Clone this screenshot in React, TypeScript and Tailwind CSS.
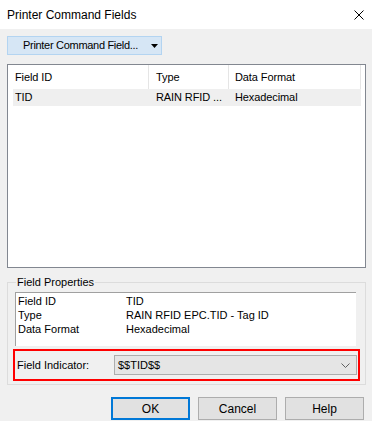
import React from 'react';

const font = { fontFamily: '"Liberation Sans", Arial, sans-serif' };

const props = [
  ['Field ID', 'TID'],
  ['Type', 'RAIN RFID EPC.TID - Tag ID'],
  ['Data Format', 'Hexadecimal'],
];

function DlgButton({ label, primary }: { label: string; primary?: boolean }) {
  return (
    <button
      className={
        primary
          ? 'w-[79px] h-[23px] bg-[#e1e1e1] border-2 border-[#0078d7] text-[12px] text-black'
          : 'w-[79px] h-[23px] bg-[#e1e1e1] border border-[#adadad] text-[12px] text-black'
      }
    >
      {label}
    </button>
  );
}

export default function App() {
  return (
    <div className="w-[372px] h-[421px] bg-[#f0f0f0] flex flex-col overflow-hidden text-black whitespace-nowrap" style={font}>
      {/* title bar */}
      <div className="h-[29px] bg-white flex items-center justify-between pl-[7px] pr-[7px] shrink-0">
        <span className="text-[12px]">Printer Command Fields</span>
        <svg width="10" height="10" viewBox="0 0 10 10" className="mr-[1px]">
          <path d="M0.5 0.5L9.5 9.5M9.5 0.5L0.5 9.5" stroke="#000" strokeWidth="1" />
        </svg>
      </div>

      <div className="flex flex-col px-[7px] pt-[7px]">
        <button className="w-[155px] h-[19px] bg-[#d6e6f5] border border-[#b3d4f1] flex items-center pl-[15px] text-[11px] tracking-[-0.3px]">
          <span>Printer Command Field...</span>
          <svg width="7" height="4" viewBox="0 0 7 4" className="ml-[13px]">
            <path d="M0 0H7L3.5 4Z" fill="#000" />
          </svg>
        </button>

        {/* list view */}
        <div className="mt-[9px] w-[359px] h-[204px] bg-white border border-[#828790] flex flex-col">
          <div className="h-[24px] flex text-[11px] tracking-[-0.1px] shrink-0">
            <div className="w-[141px] pl-[7px] flex items-center border-r border-[#e5e5e5]">Field ID</div>
            <div className="w-[80px] pl-[7px] flex items-center border-r border-[#e5e5e5]">Type</div>
            <div className="w-[132px] pl-[6px] flex items-center border-r border-[#e5e5e5]">Data Format</div>
          </div>
          <div className="ml-[5px] w-[348px] h-[17px] bg-[#efefef] flex items-center text-[11px] tracking-[-0.1px]">
            <div className="w-[136px] pl-[2px]">TID</div>
            <div className="w-[80px] pl-[7px] overflow-hidden">RAIN RFID ...</div>
            <div className="pl-[6px]">Hexadecimal</div>
          </div>
        </div>

        {/* group box */}
        <div className="relative mt-[14px] w-[359px] border border-[#dcdcdc] pt-[9px] pb-[3px] pl-[5px] pr-[5px]">
          <span className="absolute left-[8px] top-[-8px] px-[1px] bg-[#f0f0f0] text-[11px] leading-[14px]">
            Field Properties
          </span>
          <div className="ml-[2px] w-[341px] h-[54px] bg-white border-t border-l border-[#a0a0a0] pl-[2px] pt-[1px] flex flex-col text-[11px] leading-[14px]">
            {props.map(([k, v]) => (
              <div key={k} className="flex">
                <span className="w-[108px]">{k}</span>
                <span>{v}</span>
              </div>
            ))}
          </div>
          <div className="mt-[3px] w-[347px] h-[32px] border-2 border-[#ff0000] flex items-center pl-[2px]">
            <span className="w-[97px] text-[11px]">Field Indicator:</span>
            <div className="w-[243px] h-[20px] bg-[#e5e5e5] border border-[#adadad] flex items-center justify-between pl-[3px] pr-[6px]">
              <span className="text-[11px]">$$TID$$</span>
              <svg width="9" height="5" viewBox="0 0 9 5">
                <path d="M0.5 0.5L4.5 4.5L8.5 0.5" stroke="#606060" strokeWidth="1" fill="none" />
              </svg>
            </div>
          </div>
        </div>

        {/* buttons */}
        <div className="mt-[12px] flex justify-end gap-[8px] pr-[1px]">
          <DlgButton label="OK" primary />
          <DlgButton label="Cancel" />
          <DlgButton label="Help" />
        </div>
      </div>
    </div>
  );
}
